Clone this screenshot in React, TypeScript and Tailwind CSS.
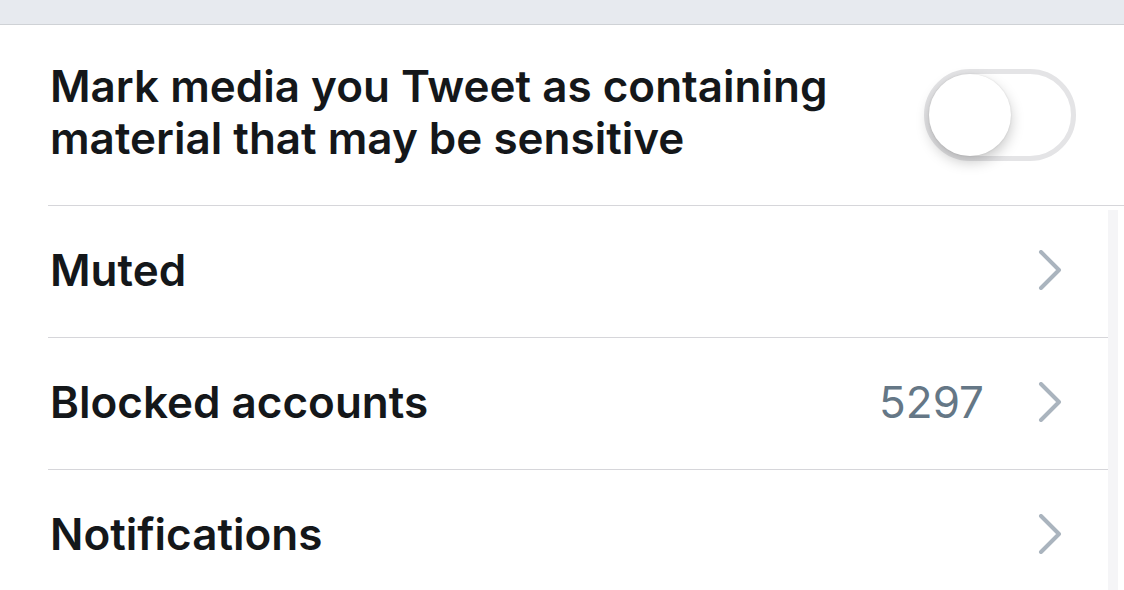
function Chevron() {
  return (
    <svg width="26" height="40" viewBox="0 0 26 40" fill="none" className="shrink-0">
      <path d="M3 2 L21 20 L3 38" stroke="#aab4be" strokeWidth="4" strokeLinecap="round" strokeLinejoin="round" />
    </svg>
  );
}

function Row({ label, value, last }: { label: string; value?: string; last?: boolean }) {
  return (
    <div className={`flex h-[132px] items-center pb-[4px] pl-[2px] ${last ? "" : "border-b border-[#d6d6da]"}`}>
      <span className="flex-1 text-[44px] font-semibold text-[#14171a]">{label}</span>
      {value && <span className="mr-[54px] text-[44px] text-[#657786]">{value}</span>}
      <div className="mr-[44px]">
        <Chevron />
      </div>
    </div>
  );
}

function Toggle() {
  return (
    <div className="relative h-[92px] w-[152px] shrink-0 rounded-full border-[5px] border-[#e4e4e6] bg-white">
      <div className="absolute left-0 top-0 h-[82px] w-[82px] rounded-full bg-white shadow-[0_6px_14px_rgba(0,0,0,0.22),0_0_2px_rgba(0,0,0,0.12)]" />
    </div>
  );
}

export default function App() {
  return (
    <div className="h-[590px] w-[1124px] overflow-hidden bg-white font-['Inter','Liberation_Sans',sans-serif]">
      <div className="h-[25px] border-b border-[#cfd2d6] bg-[#e7eaef]" />
      <div className="flex h-[180px] items-center pl-[50px] pr-[48px]">
        <p className="flex-1 pb-[6px] text-[44px] font-semibold leading-[52px] text-[#14171a]">
          Mark media you Tweet as containing
          <br />
          material that may be sensitive
        </p>
        <Toggle />
      </div>
      <div className="ml-[48px] border-t border-[#d6d6da]" />
      <div className="flex pl-[48px]">
        <div className="flex-1">
          <Row label="Muted" />
          <Row label="Blocked accounts" value="5297" />
          <Row label="Notifications" last />
        </div>
        <div className="mr-[6px] mt-[4px] w-[10px] bg-[#f5f5f7]" />
      </div>
    </div>
  );
}
